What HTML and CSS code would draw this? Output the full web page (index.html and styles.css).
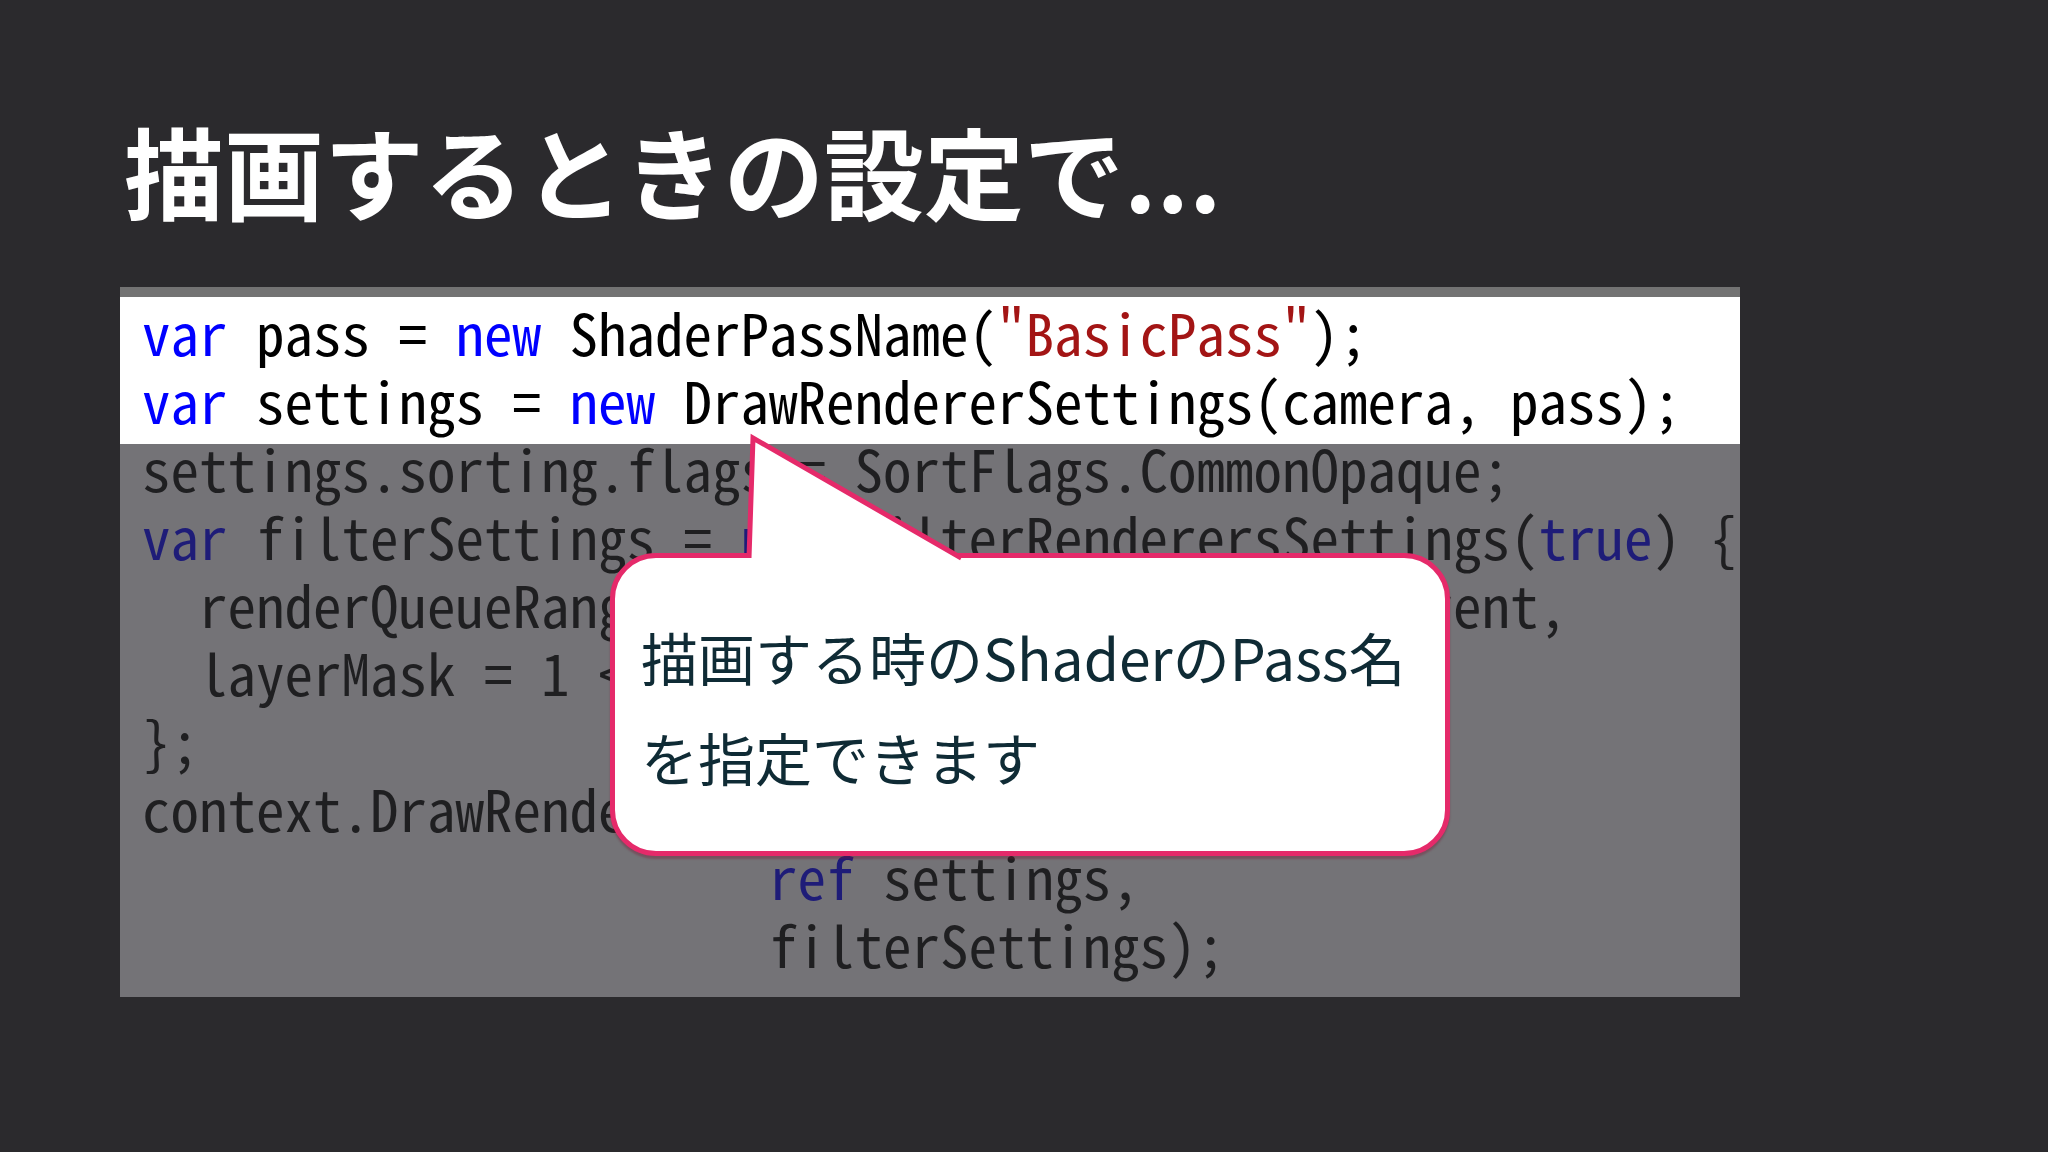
FILE: index.html
```html
<!DOCTYPE html>
<html lang="ja">
<head>
  <meta charset="UTF-8" />
  <meta name="viewport" content="width=device-width, initial-scale=1.0" />
  <title>描画するときの設定で...</title>
  <link rel="stylesheet" href="styles.css">
</head>
<body>
  <div class="slide">
    <h1>描画するときの設定で...</h1>

    <div class="code">
      <div class="hl">
        <div class="line"><span class="kw">var</span> pass = <span class="kw">new</span> ShaderPassName(<span class="str">"BasicPass"</span>);</div>
        <div class="line"><span class="kw">var</span> settings = <span class="kw">new</span> DrawRendererSettings(camera, pass);</div>
      </div>
      <div class="dim">
        <div class="line">settings.sorting.flags = SortFlags.CommonOpaque;</div>
        <div class="line"><span class="kw">var</span> filterSettings = <span class="kw">new</span> FilterRenderersSettings(<span class="kw">true</span>) {</div>
        <div class="line">  renderQueueRange = RenderQueueRange.transparent,</div>
        <div class="line">  layerMask = 1 &lt;&lt; 0</div>
        <div class="line">};</div>
        <div class="line">context.DrawRenderers(cull.visibleRenderers,</div>
        <div class="line">                      <span class="kw">ref</span> settings,</div>
        <div class="line">                      filterSettings);</div>
      </div>
    </div>

    <div class="callout">
      <svg class="pointer" width="230" height="132" viewBox="0 0 230 132">
        <polygon points="13,8 9,128 221.3,128" fill="#fff" />
        <polyline points="9,128 13,8 221.3,128" fill="none" stroke="#e52a6a" stroke-width="5" stroke-linejoin="miter" stroke-miterlimit="20" />
      </svg>
      <p>描画する時のShaderのPass名<br>を指定できます</p>
    </div>
  </div>
</body>
</html>
```

FILE: styles.css
```css
body {
  margin: 0;
  background-color: #2b2a2d;
  font-family: "Noto Sans CJK JP", sans-serif;
}

.slide {
  position: relative;
  width: 2048px;
  height: 1152px;
  overflow: hidden;
}

h1 {
  margin: 0;
  padding: 110px 0 0 124px;
  font-size: 100px;
  line-height: 120px;
  font-weight: 700;
  color: #fff;
}

.code {
  margin: 57px 0 0 120px;
  width: 1620px;
  background-color: #747377;
  border-top: 10px solid #737373;
  font-family: "Noto Sans Mono CJK JP", "Liberation Mono", monospace;
  font-size: 57px;
  color: #1f1f21;
}

.line {
  height: 68px;
  line-height: 68px;
  white-space: pre;
}

.hl {
  background-color: #fff;
  padding: 0 22px 11px;
  color: #000;
}

.hl .kw {
  color: #0000ff;
}

.str {
  color: #a31515;
}

.dim {
  margin-top: -11px;
  padding: 0 22px 20px;
}

.dim .kw {
  color: #1e1c78;
}

.callout {
  position: absolute;
  left: 610px;
  top: 553px;
  width: 840px;
  height: 303px;
  box-sizing: border-box;
  background-color: #fff;
  border: 5px solid #e52a6a;
  border-radius: 46px;
  box-shadow: 0 3px 2px rgba(120, 20, 50, 0.35);
}

.pointer {
  position: absolute;
  left: 125px;
  top: -128px;
}

.callout p {
  margin: 0;
  padding: 48px 0 0 26px;
  font-size: 57px;
  line-height: 100px;
  color: #0f2b35;
}
```
